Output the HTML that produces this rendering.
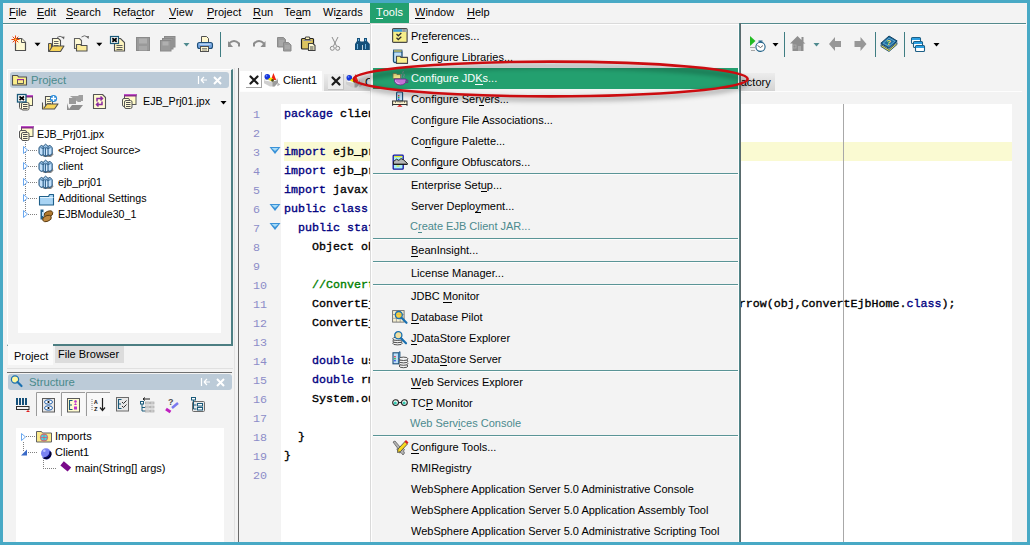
<!DOCTYPE html>
<html><head><meta charset="utf-8">
<style>
html,body{margin:0;padding:0}
body{width:1030px;height:545px;overflow:hidden;position:relative;background:#48a9c5;font-family:"Liberation Sans",sans-serif;font-size:11px;color:#000}
.a{position:absolute}
.t{position:absolute;line-height:13px;white-space:pre;font-size:11px}
u{text-decoration:none;border-bottom:1px solid currentColor;display:inline-block;line-height:11px}
.code{position:absolute;font-family:"Liberation Mono",monospace;font-size:11.67px;line-height:19px;white-space:pre;font-weight:normal;color:#000;-webkit-text-stroke:0.35px currentColor}
.kw{color:#000080}
.cm{color:#008000;font-weight:normal}
.ln{position:absolute;font-family:"Liberation Mono",monospace;font-size:11.67px;line-height:19px;color:#8c8cc8;white-space:pre}
</style></head><body>
<!-- window interior -->
<div class="a" style="left:3px;top:3px;width:1024px;height:539px;background:#f3f3f3"></div>
<!-- menubar -->
<div class="a" style="left:3px;top:23px;width:1023px;height:1px;background:#53898c"></div>
<div class="a" style="left:3px;top:24px;width:1024px;height:1px;background:#fdfdfd"></div>
<div class="a" style="left:370px;top:3px;width:39px;height:20px;background:#23a06f"></div>
<div class="t" style="left:9px;top:6px"><u>F</u>ile</div>
<div class="t" style="left:37px;top:6px"><u>E</u>dit</div>
<div class="t" style="left:66px;top:6px"><u>S</u>earch</div>
<div class="t" style="left:113px;top:6px">Refa<u>c</u>tor</div>
<div class="t" style="left:169px;top:6px"><u>V</u>iew</div>
<div class="t" style="left:207px;top:6px"><u>P</u>roject</div>
<div class="t" style="left:253px;top:6px"><u>R</u>un</div>
<div class="t" style="left:284px;top:6px">Te<u>a</u>m</div>
<div class="t" style="left:323px;top:6px">Wi<u>z</u>ards</div>
<div class="t" style="left:376px;top:6px;color:#fff"><u>T</u>ools</div>
<div class="t" style="left:415px;top:6px"><u>W</u>indow</div>
<div class="t" style="left:467px;top:6px"><u>H</u>elp</div>

<svg class="a" style="left:0;top:0" width="1030" height="70"><path d="M15.5 38.5h6l4 4v8h-10z" fill="#fffbd6" stroke="#505050" stroke-width="1.2" stroke-linejoin="round"/><path d="M21.5 38.5v4h4" fill="#fffbd6" stroke="#505050" stroke-width="1"/><g stroke="#e8400c" stroke-width="1"><path d="M15.5 35.5v8M11.5 39.5h8M12.7 36.7l5.6 5.6M18.3 36.7l-5.6 5.6"/></g><circle cx="15.5" cy="39.5" r="0.9" fill="#ffd020"/><path d="M34.5 42.8h6l-3 3.5z" fill="#000"/><path d="M48.5 43.5h3v8h-3z" fill="#f0c850" stroke="#505050" stroke-width="1"/><path d="M52.5 38.5h6l2 2v8.5h-8z" fill="#fffbd6" stroke="#505050" stroke-width="1.1"/><path d="M54 41.5h4.5M54 43.5h4.5M54 45.5h4.5" stroke="#606060" stroke-width="1"/><path d="M49 51.5l3.5-5.5h11.5l-3.5 5.5z" fill="#f7d45a" stroke="#505050" stroke-width="1.1" stroke-linejoin="round"/><path d="M57 37.5q3-2.5 6 0" fill="none" stroke="#707070" stroke-width="1"/><path d="M61.5 37l2.5 2.5 0.5-3z" fill="#606060"/><path d="M74.5 38.5h5l2 2v8h-7z" fill="#fffbd6" stroke="#606060" stroke-width="1.1"/><path d="M76.5 44.5h4l1 1h5.5v5.5h-10.5z" fill="#fcec9a" stroke="#505050" stroke-width="1.1" stroke-linejoin="round"/><path d="M81.5 37q3-2.5 6 0" fill="none" stroke="#707070" stroke-width="1"/><path d="M86 36.5l2.5 2.5 0.5-3z" fill="#606060"/><path d="M96.3 42.8h6l-3 3.5z" fill="#000"/><path d="M114.5 38.5h6l4 4v8.5h-10z" fill="#fff6c0" stroke="#505050" stroke-width="1.1"/><g stroke="#606060" stroke-width="1"><path d="M116.5 45.5h6M116.5 47.5h6M116.5 49.5h6"/></g><rect x="110.5" y="36.5" width="8" height="7" fill="#fff" stroke="#1a5a7a" stroke-width="1.2"/><path d="M112.3 38.3l4.4 3.4M116.7 38.3l-4.4 3.4" stroke="#000" stroke-width="1.8"/><rect x="136.5" y="37.5" width="13" height="13" fill="#9a9a9a" stroke="#8a8a8a"/><rect x="139" y="38.5" width="8" height="5" fill="#b0b0b0"/><rect x="139" y="46" width="8" height="4.5" fill="#a8a8a8"/><rect x="164.5" y="36.5" width="10.5" height="10.5" fill="#9a9a9a" stroke="#8a8a8a"/><rect x="162.5" y="38.5" width="10.5" height="10.5" fill="#9a9a9a" stroke="#8a8a8a"/><rect x="160.5" y="40.5" width="10.5" height="10.5" fill="#9a9a9a" stroke="#8a8a8a"/><rect x="162.5" y="41.5" width="6" height="4" fill="#b0b0b0"/><path d="M183.5 43h6l-3 3.5z" fill="#4e8a8e"/><path d="M201.5 36.5h5l2 2v4h-7z" fill="#fff8d0" stroke="#505050" stroke-width="1"/><rect x="197.5" y="42.5" width="15" height="6" rx="2" fill="#74a4de" stroke="#1f4f78" stroke-width="1.1"/><rect x="199.5" y="43.5" width="11" height="1.5" fill="#b8d4f4"/><rect x="200.5" y="46.5" width="8" height="5" fill="#fff8d0" stroke="#505050" stroke-width="1"/><path d="M202 48.5h5M202 50h5" stroke="#707070" stroke-width="0.8"/><path d="M229 43.5q5-5 10 0v3" fill="none" stroke="#8c8c8c" stroke-width="2"/><path d="M228 41v6h5z" fill="#8c8c8c"/><path d="M254 46.5v-3q5-5 10 0" fill="none" stroke="#8c8c8c" stroke-width="2"/><path d="M265.5 41v6h-5z" fill="#8c8c8c"/><path d="M277.5 37.5h6l2 2v7.5h-8z" fill="#9c9c9c" stroke="#8c8c8c"/><path d="M279 41h5M279 43h5M279 45h5" stroke="#bcbcbc" stroke-width="0.8"/><path d="M283.5 42.5h5l2.5 2.5v6h-7.5z" fill="#9c9c9c" stroke="#8c8c8c"/><path d="M285 46h5M285 48h5" stroke="#bcbcbc" stroke-width="0.8"/><rect x="301.5" y="38.5" width="12" height="10.5" rx="1" fill="#dcc460" stroke="#202020" stroke-width="1.2"/><path d="M305 39.5h5l-0.5-2.5h-4z" fill="#fff6c0" stroke="#303030" stroke-width="0.9"/><path d="M303.5 40.5h8" stroke="#8a8a9a" stroke-width="1"/><path d="M308.5 43.5h4.5l2 2v5h-6.5z" fill="#fffbd6" stroke="#404040" stroke-width="1.1"/><rect x="310" y="46.5" width="3.5" height="1" fill="#404040"/><rect x="310" y="48.5" width="3.5" height="1" fill="#404040"/><g fill="none" stroke="#8c8c8c" stroke-width="1"><path d="M332 37l4.5 9M338 37l-4.5 9"/><circle cx="332.3" cy="48.3" r="2"/><circle cx="337.7" cy="48.3" r="2"/></g><path d="M357 38h3v3l2 3v6h-7v-6l2-3z" fill="#15507a"/><path d="M364 38h3v3l2.8 3v6h-7v-6l1.2-3z" fill="#15507a"/><rect x="360" y="41.5" width="4" height="3.5" fill="#15507a"/><path d="M358.5 39v2M357.5 44v5M365.5 39v2M365.5 44v5" stroke="#78c0ec" stroke-width="0.9"/><path d="M750 36v10l5.5-5z" fill="#22bb22"/><circle cx="760.5" cy="46.8" r="4.6" fill="#fff" stroke="#1d5f86" stroke-width="1.1"/><path d="M758.5 41.2h4M760.5 41.2v1" stroke="#1d5f86" stroke-width="1.2"/><path d="M757.5 45.5l3 2 2.5-2" fill="none" stroke="#404040" stroke-width="0.8"/><path d="M750 47.5h5M751 50.5h4" stroke="#a8a8a8" stroke-width="1"/><path d="M772.5 43h6l-3 3.5z" fill="#000"/><path d="M790 43.5l7.5-7.5 4 4v-3h2v5l2 1.5h-2v7.5h-11v-7.5z" fill="#8e8e8e"/><rect x="793" y="45" width="3" height="3" fill="none" stroke="#b0b0b0" stroke-width="0.8"/><rect x="798" y="46" width="3" height="5" fill="#a8a8a8"/><path d="M813.5 43h6l-3 3.5z" fill="#4e8a8e"/><path d="M829 44l6-7v4h6v6h-6v4z" fill="#979797"/><path d="M866.5 44l-6-7v4h-6v6h6v4z" fill="#979797"/><path d="M881 44.5L889 49.5 897 42.5V44.5L889 51.5 881 46.5Z" fill="#f8e040" stroke="#174e78" stroke-width="0.9"/><path d="M880.8 43.3L889 36 897.2 41 889 48.3Z" fill="#1f6f9f" stroke="#0e3e60" stroke-width="1"/><path d="M883.2 43.2L889 38.2 894.8 41.2 889 46.2Z" fill="none" stroke="#8ac8ee" stroke-width="0.6"/><text x="886.3" y="45.3" font-family="Liberation Sans" font-size="8" font-weight="bold" fill="#f8ec58">?</text><rect x="911.5" y="37.5" width="9" height="6" rx="1" fill="#fff" stroke="#1d5f86" stroke-width="1.1"/><rect x="912.0" y="38.0" width="8" height="2" fill="#2b9ee0"/><rect x="913.5" y="41.5" width="9" height="6" rx="1" fill="#fff" stroke="#1d5f86" stroke-width="1.1"/><rect x="914.0" y="42.0" width="8" height="2" fill="#2b9ee0"/><rect x="915.5" y="45.5" width="9" height="6" rx="1" fill="#fff" stroke="#1d5f86" stroke-width="1.1"/><rect x="916.0" y="46.0" width="8" height="2" fill="#2b9ee0"/><path d="M933.5 43h6l-3 3.5z" fill="#000"/></svg>
<!-- toolbar separators -->
<div class="a" style="left:220px;top:32px;width:1px;height:25px;background:#3f7d82"></div>
<div class="a" style="left:784px;top:32px;width:1px;height:25px;background:#3f7d82"></div>
<div class="a" style="left:875px;top:32px;width:1px;height:25px;background:#3f7d82"></div>
<div class="a" style="left:904px;top:32px;width:1px;height:25px;background:#3f7d82"></div>

<!-- PROJECT PANEL -->
<div class="a" style="left:7px;top:69px;width:223px;height:274px;background:#f3f3f3;border-top:1px solid #fff;border-left:1px solid #fff;border-right:2px solid #4c7e82;border-bottom:2px solid #4c7e82"></div>
<div class="a" style="left:10px;top:72px;width:219px;height:16px;background:#bccbd8;border-radius:3px"></div>
<div class="t" style="left:31px;top:74px;color:#4a8a8c;font-size:11.3px">Project</div>
<div class="a" style="left:18px;top:125px;width:203px;height:208px;background:#fff"></div>
<div class="t" style="left:143px;top:95px;font-size:10.7px">EJB_Prj01.jpx</div>
<div class="t" style="left:37px;top:128px;font-size:10.7px">EJB_Prj01.jpx</div>
<div class="t" style="left:58px;top:144px;font-size:10.7px">&lt;Project Source&gt;</div>
<div class="t" style="left:58px;top:160px;font-size:10.7px">client</div>
<div class="t" style="left:58px;top:176px;font-size:10.7px">ejb_prj01</div>
<div class="t" style="left:58px;top:192px;font-size:10.7px">Additional Settings</div>
<div class="t" style="left:58px;top:208px;font-size:10.7px">EJBModule30_1</div>
<!-- tabs -->
<div class="a" style="left:8px;top:344px;width:45px;height:21px;background:#fbfbfb"></div>
<div class="a" style="left:55px;top:346px;width:69px;height:17px;background:#dcdcdc"></div>
<div class="t" style="left:14px;top:350px">Project</div>
<div class="t" style="left:58px;top:348px">File Browser</div>
<div class="a" style="left:7px;top:368px;width:226px;height:1px;background:#e0e0e0"></div>
<div class="a" style="left:234px;top:68px;width:1px;height:474px;background:#e2e2e2"></div>
<div class="a" style="left:7px;top:372px;width:225px;height:1px;background:#707070"></div>

<!-- STRUCTURE PANEL -->
<div class="a" style="left:8px;top:374px;width:224px;height:16px;background:#bccbd8;border-radius:3px"></div>
<div class="t" style="left:29px;top:376px;color:#4a8a8c;font-size:11.3px">Structure</div>
<div class="a" style="left:16px;top:428px;width:208px;height:114px;background:#fff"></div>
<div class="t" style="left:55px;top:430px">Imports</div>
<div class="t" style="left:55px;top:446px">Client1</div>
<div class="t" style="left:75px;top:462px">main(String[] args)</div>

<!-- vertical split lines -->
<div class="a" style="left:238px;top:68px;width:1px;height:474px;background:#6a6a6a"></div>

<!-- EDITOR -->
<div class="a" style="left:240px;top:71px;width:82px;height:20px;background:#fff"></div>
<div class="a" style="left:246px;top:72px;width:15px;height:15px;border-right:1px solid #a4a4a4;border-bottom:1px solid #a4a4a4"></div>
<div class="t" style="left:283px;top:74px">Client1</div>
<div class="a" style="left:324px;top:74px;width:50px;height:17px;background:linear-gradient(#ececec,#d4d4d4)"></div>
<div class="a" style="left:328px;top:74px;width:15px;height:15px;background:#ededed;border-right:1px solid #c4c4c4;border-bottom:1px solid #c4c4c4"></div>
<div class="t" style="left:365px;top:76px">ConvertEjb</div>
<div class="a" style="left:740px;top:73px;width:35px;height:18px;background:linear-gradient(#ececec,#d4d4d4)"></div>
<div class="t" style="left:734px;top:76px">Factory</div>
<div class="a" style="left:240px;top:91px;width:782px;height:1px;background:#fdfdfd"></div>
<div class="a" style="left:281px;top:104px;width:731px;height:438px;background:#fff"></div>
<div class="a" style="left:284px;top:142px;width:728px;height:19px;background:#fafad2"></div>
<div class="a" style="left:843px;top:104px;width:1px;height:438px;background:#a8a8a8"></div>

<div class="ln" style="left:253px;top:106px">1</div>
<div class="ln" style="left:253px;top:125px">2</div>
<div class="ln" style="left:253px;top:144px">3</div>
<div class="ln" style="left:253px;top:163px">4</div>
<div class="ln" style="left:253px;top:182px">5</div>
<div class="ln" style="left:253px;top:201px">6</div>
<div class="ln" style="left:253px;top:220px">7</div>
<div class="ln" style="left:253px;top:239px">8</div>
<div class="ln" style="left:253px;top:258px">9</div>
<div class="ln" style="left:253px;top:277px">10</div>
<div class="ln" style="left:253px;top:296px">11</div>
<div class="ln" style="left:253px;top:315px">12</div>
<div class="ln" style="left:253px;top:334px">13</div>
<div class="ln" style="left:253px;top:353px">14</div>
<div class="ln" style="left:253px;top:372px">15</div>
<div class="ln" style="left:253px;top:391px">16</div>
<div class="ln" style="left:253px;top:410px">17</div>
<div class="ln" style="left:253px;top:429px">18</div>
<div class="ln" style="left:253px;top:448px">19</div>
<div class="ln" style="left:253px;top:467px">20</div>
<div class="code" style="left:284px;top:105px"><span class="kw">package</span> clientx;</div>
<div class="code" style="left:284px;top:143px"><span class="kw">import</span> ejb_prj01.*;</div>
<div class="code" style="left:284px;top:162px"><span class="kw">import</span> ejb_prj01.x;</div>
<div class="code" style="left:284px;top:181px"><span class="kw">import</span> javax.rmi.*;</div>
<div class="code" style="left:284px;top:200px"><span class="kw">public</span> <span class="kw">class</span> Client1 {</div>
<div class="code" style="left:284px;top:219px">  <span class="kw">public</span> <span class="kw">static</span> void</div>
<div class="code" style="left:284px;top:238px">    Object obj = x;</div>
<div class="code" style="left:284px;top:276px">    <span class="cm">//ConvertEjb</span></div>
<div class="code" style="left:284px;top:295px">    ConvertEjbHome home = (ConvertEjbHome)PortableRemoteObject.narrow(obj,ConvertEjbHome.<span class="kw">class</span>);</div>
<div class="code" style="left:284px;top:314px">    ConvertEjb x;</div>
<div class="code" style="left:284px;top:352px">    <span class="kw">double</span> usd;</div>
<div class="code" style="left:284px;top:371px">    <span class="kw">double</span> rmb;</div>
<div class="code" style="left:284px;top:390px">    System.out;</div>
<div class="code" style="left:284px;top:428px">  }</div>
<div class="code" style="left:284px;top:447px">}</div>

<svg class="a" style="left:0;top:0" width="1030" height="545"><path d="M12.5 75.5h5l1 1.5h8v8h-14z" fill="#fbee8a" stroke="#505050" stroke-width="1.1" stroke-linejoin="round"/><rect x="17.5" y="79.5" width="6" height="4" fill="#fbee8a" stroke="#505050" stroke-width="0.9"/><rect x="17" y="79" width="7" height="1.2" fill="#9a2aa0"/><path d="M198.5 76v8M201 80h6M201 80l3-3M201 80l3 3" stroke="#fff" stroke-width="1.2" fill="none"/><path d="M214 77l7 7M221 77l-7 7" stroke="#fff" stroke-width="2"/><rect x="25.5" y="95.5" width="7" height="10" fill="#fffbc8" stroke="#555" stroke-width="1"/><rect x="25" y="95" width="8" height="2.5" fill="#8a2a90"/><rect x="25" y="95" width="8" height="1" fill="#c050c8"/><rect x="19.5" y="101.5" width="7" height="7.5" rx="1.5" fill="#fffbd8" stroke="#555" stroke-width="1"/><rect x="21.5" y="102.5" width="7.5" height="7.5" rx="1.5" fill="#fffbd8" stroke="#555" stroke-width="1"/><path d="M23 104.5h4.5M23 106.5h4.5M23 108.5h4.5" stroke="#505050" stroke-width="1"/><rect x="17.5" y="94.5" width="8.5" height="7.5" fill="#fff" stroke="#1a5a7a" stroke-width="1.3"/><path d="M19.5 96.5l4.5 3.5M24 96.5l-4.5 3.5" stroke="#000" stroke-width="1.6"/><path d="M45.5 96.5h6l1 1v9h-7z" fill="#fffbd6" stroke="#505050" stroke-width="1.1"/><path d="M47 99.5h4M47 101.5h4M47 103.5h4" stroke="#606060" stroke-width="0.9"/><path d="M42.5 102.5v6.5h12l3.5-5h-11l-3 4" fill="#f7d45a" stroke="#505050" stroke-width="1.1" stroke-linejoin="round"/><circle cx="53.5" cy="98.5" r="3.6" fill="#2a8ad8"/><path d="M51 98.5h5M53.5 96v5" stroke="#fff" stroke-width="1.4"/><path d="M70 96h8l1-1h4v6h-2v1h-3" fill="#a0a0a0"/><path d="M69 98h7v6h-7z" fill="#9a9a9a"/><path d="M67 103v7h12l4-5h-11l-3 4z" fill="#8e8e8e"/><path d="M93.5 94.5h9l3 3v11h-12z" fill="#fffbd0" stroke="#555" stroke-width="1.1" stroke-linejoin="round"/><path d="M97 101.5v-3h5M100.5 96.5l2 2-2 2M102 101.5v3h-5M98.5 102.5l-2 2 2 2" fill="none" stroke="#8a2aa0" stroke-width="1.5"/><rect x="124.5" y="94.5" width="11.5" height="10" fill="#fffbc8" stroke="#555" stroke-width="1"/><rect x="124" y="94" width="12.5" height="2.5" fill="#8a2a90"/><rect x="124" y="94" width="12.5" height="1" fill="#c050c8"/><rect x="122.5" y="98.5" width="7" height="8" rx="1.5" fill="#fffbd8" stroke="#555" stroke-width="1"/><rect x="124.5" y="100.5" width="7.5" height="8" rx="1.5" fill="#fffbd8" stroke="#555" stroke-width="1"/><path d="M126 102.5h4.5M126 104.5h4.5M126 106.5h4.5" stroke="#505050" stroke-width="1"/><path d="M220.5 101h6l-3 3.5z" fill="#000"/><rect x="21.5" y="126.5" width="11.5" height="10" fill="#fffbc8" stroke="#555" stroke-width="1"/><rect x="21" y="126" width="12.5" height="2.5" fill="#8a2a90"/><rect x="21" y="126" width="12.5" height="1" fill="#c050c8"/><rect x="19.5" y="130.5" width="7" height="8" rx="1.5" fill="#fffbd8" stroke="#555" stroke-width="1"/><rect x="21.5" y="132.5" width="7.5" height="8" rx="1.5" fill="#fffbd8" stroke="#555" stroke-width="1"/><path d="M23 134.5h4.5M23 136.5h4.5M23 138.5h4.5" stroke="#505050" stroke-width="1"/><path d="M25.5 142V215" stroke="#808080" stroke-width="1" stroke-dasharray="1 1"/><path d="M23.5 146.5l4 3.5-4 3.5z" fill="#fff" stroke="#6aa8f0" stroke-width="1"/><path d="M28 150.5H38" stroke="#808080" stroke-width="1" stroke-dasharray="1 1"/><path d="M23.5 162.5l4 3.5-4 3.5z" fill="#fff" stroke="#6aa8f0" stroke-width="1"/><path d="M28 166.5H38" stroke="#808080" stroke-width="1" stroke-dasharray="1 1"/><path d="M23.5 178.5l4 3.5-4 3.5z" fill="#fff" stroke="#6aa8f0" stroke-width="1"/><path d="M28 182.5H38" stroke="#808080" stroke-width="1" stroke-dasharray="1 1"/><path d="M23.5 194.5l4 3.5-4 3.5z" fill="#fff" stroke="#6aa8f0" stroke-width="1"/><path d="M28 198.5H38" stroke="#808080" stroke-width="1" stroke-dasharray="1 1"/><path d="M23.5 210.5l4 3.5-4 3.5z" fill="#fff" stroke="#6aa8f0" stroke-width="1"/><path d="M28 214.5H38" stroke="#808080" stroke-width="1" stroke-dasharray="1 1"/><g transform="translate(38 143)"><path d="M4 12.5l2 1.5h7l2.5-2.5-1-2z" fill="#606060" opacity="0.75"/><path d="M1 4.5L3.2 2.5 5.2 3.3 7.6 1.2 10 3.3 12 2.5 14.2 4.5V10.5L12 12.5 10 11.8 7.6 13.5 5.2 11.8 3.2 12.5 1 10.5Z" fill="#a9d0f2" stroke="#1f4f78" stroke-width="1"/><path d="M5.2 3.5v8.3M10 3.5v8.3M7.6 5v8.3" stroke="#1f4f78" stroke-width="0.9"/><path d="M2.5 4.5l2.7 1 2.4-1.3 2.4 1.3 2.5-1" stroke="#1f4f78" stroke-width="0.8" fill="none"/><path d="M3 6v5M8.6 6.5v5.5M12 6v5" stroke="#e4f2ff" stroke-width="0.9"/></g><g transform="translate(38 159)"><path d="M4 12.5l2 1.5h7l2.5-2.5-1-2z" fill="#606060" opacity="0.75"/><path d="M1 4.5L3.2 2.5 5.2 3.3 7.6 1.2 10 3.3 12 2.5 14.2 4.5V10.5L12 12.5 10 11.8 7.6 13.5 5.2 11.8 3.2 12.5 1 10.5Z" fill="#a9d0f2" stroke="#1f4f78" stroke-width="1"/><path d="M5.2 3.5v8.3M10 3.5v8.3M7.6 5v8.3" stroke="#1f4f78" stroke-width="0.9"/><path d="M2.5 4.5l2.7 1 2.4-1.3 2.4 1.3 2.5-1" stroke="#1f4f78" stroke-width="0.8" fill="none"/><path d="M3 6v5M8.6 6.5v5.5M12 6v5" stroke="#e4f2ff" stroke-width="0.9"/></g><g transform="translate(38 175)"><path d="M4 12.5l2 1.5h7l2.5-2.5-1-2z" fill="#606060" opacity="0.75"/><path d="M1 4.5L3.2 2.5 5.2 3.3 7.6 1.2 10 3.3 12 2.5 14.2 4.5V10.5L12 12.5 10 11.8 7.6 13.5 5.2 11.8 3.2 12.5 1 10.5Z" fill="#a9d0f2" stroke="#1f4f78" stroke-width="1"/><path d="M5.2 3.5v8.3M10 3.5v8.3M7.6 5v8.3" stroke="#1f4f78" stroke-width="0.9"/><path d="M2.5 4.5l2.7 1 2.4-1.3 2.4 1.3 2.5-1" stroke="#1f4f78" stroke-width="0.8" fill="none"/><path d="M3 6v5M8.6 6.5v5.5M12 6v5" stroke="#e4f2ff" stroke-width="0.9"/></g><path d="M39.5 196.5h9l1-2h4v10.5h-14z" fill="#a8d4f4" stroke="#1f5f8a" stroke-width="1.1" stroke-linejoin="round"/><path d="M40 197.5h13.5" stroke="#e8f6ff" stroke-width="0.9"/><path d="M40.5 209.5h3v10h-3z" fill="#1f5f8a"/><rect x="42" y="212" width="2.5" height="4" fill="#bfe0f8"/><ellipse cx="48.5" cy="214" rx="4.5" ry="2.8" fill="#b07a30" stroke="#5a3a10" stroke-width="0.9" transform="rotate(-20 48.5 214)"/><ellipse cx="47" cy="218.5" rx="4.5" ry="2.8" fill="#c08a40" stroke="#5a3a10" stroke-width="0.9" transform="rotate(-20 47 218.5)"/><circle cx="15" cy="379.5" r="3.6" fill="#fff8a0" stroke="#1a70b0" stroke-width="1.2"/><path d="M17.5 382l4 4" stroke="#1a70b0" stroke-width="2.2" stroke-linecap="round"/><path d="M201.5 378v8M204 382h6M204 382l3-3M204 382l3 3" stroke="#fff" stroke-width="1.2" fill="none"/><path d="M217 379l7 7M224 379l-7 7" stroke="#fff" stroke-width="2"/><path d="M17 398v7M20 398v7M23 398v7M26 398v7" stroke="#15507a" stroke-width="2"/><rect x="16.5" y="406.5" width="12.5" height="3" fill="#f3f3f3" stroke="#303030" stroke-width="1"/><path d="M26 412h4l-2-2z" fill="#e02020"/><rect x="36" y="392" width="24" height="24" fill="#f8f8f8"/><path d="M36.5 416V392.5H60" fill="none" stroke="#9a9a9a" stroke-width="1"/><rect x="61" y="392" width="24" height="24" fill="#f8f8f8"/><path d="M61.5 416V392.5H85" fill="none" stroke="#9a9a9a" stroke-width="1"/><rect x="86" y="392" width="24" height="24" fill="#f8f8f8"/><path d="M86.5 416V392.5H110" fill="none" stroke="#9a9a9a" stroke-width="1"/><rect x="42.5" y="398.5" width="12" height="13.5" fill="#e8e8e8" stroke="#5a5a5a" stroke-width="1"/><g fill="#fff" stroke="#1a5aa8" stroke-width="1"><ellipse cx="48.5" cy="402" rx="4" ry="2.2"/><ellipse cx="48.5" cy="408" rx="4" ry="2.2"/></g><circle cx="48.5" cy="402" r="1.1" fill="#000"/><circle cx="48.5" cy="408" r="1.1" fill="#000"/><rect x="67.5" y="398.5" width="12" height="13.5" fill="#fffbd0" stroke="#5a5a5a" stroke-width="1"/><path d="M72.5 400.5h-3v9h3M69.5 405h2.5" stroke="#1a5a7a" stroke-width="1.1" fill="none"/><circle cx="75.5" cy="401.5" r="1.3" fill="#c030d0"/><path d="M74 405l1.5-2 1.5 2z" fill="#c030d0"/><rect x="74" y="406.5" width="3" height="3" fill="#c030d0"/><path d="M92 399v12" stroke="#808080" stroke-width="1" stroke-dasharray="1 1"/><text x="94" y="404" font-family="Liberation Mono" font-size="6" font-weight="bold" fill="#202020">A</text><text x="94" y="410.5" font-family="Liberation Mono" font-size="6" font-weight="bold" fill="#202020">Z</text><path d="M102.5 398v12M100 407.5l2.5 3 2.5-3" stroke="#202020" stroke-width="1.2" fill="none"/><rect x="116.5" y="397.5" width="12" height="13.5" fill="#e8e8e8" stroke="#6a6a6a" stroke-width="1"/><path d="M121.5 399.5h-3v9h3M118.5 404h2.5" stroke="#1a5a7a" stroke-width="1.1" fill="none"/><path d="M122 402l1.5 1.5 3-3M122 406l1.5 1.5 3-3" stroke="#303030" stroke-width="1" fill="none"/><path d="M143 399h7M143 399l2-1.5M143 399l2 1.5" stroke="#202020" stroke-width="1" fill="none"/><rect x="140.5" y="401.5" width="3" height="2.5" fill="#fff" stroke="#1a5a7a" stroke-width="1"/><path d="M142 404v7h3M142 407.5h3" stroke="#1a5a7a" stroke-width="1" fill="none"/><g fill="#d8d8d8" stroke="#a8a8a8" stroke-width="0.7"><rect x="145.5" y="402" width="4" height="2"/><rect x="145.5" y="406" width="4" height="2"/><rect x="145.5" y="410" width="4" height="2"/><rect x="150.5" y="402" width="3.5" height="2"/><rect x="150.5" y="406" width="3.5" height="2"/><rect x="150.5" y="410" width="3.5" height="2"/></g><text x="168" y="405" font-family="Liberation Sans" font-size="9" font-weight="bold" fill="#505050">?</text><path d="M166 409l4.5 3" stroke="#c020c0" stroke-width="3"/><path d="M172 408l6-5" stroke="#7a7af0" stroke-width="2.5"/><rect x="191.5" y="397.5" width="4" height="2.5" fill="#fff" stroke="#1a5a7a" stroke-width="1"/><rect x="192.5" y="401.5" width="12" height="10" rx="1" fill="#e8e8e8" stroke="#6a6a6a" stroke-width="1"/><path d="M193.5 400v9h3M193.5 405h3" stroke="#1a5a7a" stroke-width="1" fill="none"/><rect x="197.5" y="403.5" width="5" height="2.5" fill="#fff" stroke="#1a5a7a" stroke-width="1"/><rect x="197.5" y="407.5" width="5" height="2.5" fill="#fff" stroke="#1a5a7a" stroke-width="1"/><path d="M21.5 433.5l4 3.5-4 3.5z" fill="#fff" stroke="#6aa8f0" stroke-width="1"/><path d="M26 436.5H36" stroke="#808080" stroke-width="1" stroke-dasharray="1 1"/><path d="M36.5 431.5h5l1 1.5h9v9h-15z" fill="#fbe98a" stroke="#606060" stroke-width="1" stroke-linejoin="round"/><circle cx="44" cy="437.5" r="3.6" fill="#40d8e8" stroke="#d06070" stroke-width="1"/><path d="M40.5 437.5h7M44 434v7" stroke="#d06070" stroke-width="0.8"/><path d="M23.5 442V452" stroke="#808080" stroke-width="1" stroke-dasharray="1 1"/><path d="M21 455.5h6v-6z" fill="#3a6ac8"/><path d="M28 452.5H38" stroke="#808080" stroke-width="1" stroke-dasharray="1 1"/><circle cx="46" cy="453.3" r="5" fill="#7a82f2"/><path d="M50.6 451.2A5 5 0 0 1 42 457.2A6 6 0 0 0 49.5 451z" fill="#0a0a80"/><path d="M50.8 452a5 5 0 0 1 -6.5 6" stroke="#000" stroke-width="1" fill="none"/><circle cx="44.3" cy="450.8" r="1.3" fill="#b8c0ff"/><path d="M43.5 460V469" stroke="#808080" stroke-width="1" stroke-dasharray="1 1"/><path d="M43 468.5H57" stroke="#808080" stroke-width="1" stroke-dasharray="1 1"/><path d="M63.8 461.2L71.2 467.4 67.6 471.6 60.4 465.4z" fill="#7a0a8a"/><path d="M269.5 147h11l-5.5 7z" fill="#3a92d8"/><path d="M271.5 148h7l-3.5 3z" fill="#a8dcf8"/><path d="M269.5 204h11l-5.5 7z" fill="#3a92d8"/><path d="M271.5 205h7l-3.5 3z" fill="#a8dcf8"/><path d="M269.5 223h11l-5.5 7z" fill="#3a92d8"/><path d="M271.5 224h7l-3.5 3z" fill="#a8dcf8"/><g transform="translate(264 73)"><path d="M13.5 9.5l2.8 2-3 1.8z" fill="#b4b4b4"/><path d="M0 6.3L14 5.8v4l-3.5 3.7h-4.5L0 10.3z" fill="#cfcfcf"/><path d="M8.5 8.3L14 5.8v4l-3.5 3.7h-2z" fill="#9c9c9c"/><path d="M0.5 7L8 8.3 13.5 6.6" stroke="#fff" stroke-width="1" fill="none"/><circle cx="3.3" cy="3.7" r="2.8" fill="#1434d8"/><circle cx="2.5" cy="2.8" r="0.9" fill="#6a8aff"/><path d="M9.4 0.1L12.2 6.9H7z" fill="#f22010"/><path d="M3.9 6.2L6.8 4.3l2.9 2-2.9 1.8z" fill="#f2e400"/><circle cx="8.5" cy="7.4" r="1.3" fill="#4a4a10"/></g><g transform="translate(346 74)"><path d="M13.5 9.5l2.8 2-3 1.8z" fill="#b4b4b4"/><path d="M0 6.3L14 5.8v4l-3.5 3.7h-4.5L0 10.3z" fill="#cfcfcf"/><path d="M8.5 8.3L14 5.8v4l-3.5 3.7h-2z" fill="#9c9c9c"/><path d="M0.5 7L8 8.3 13.5 6.6" stroke="#fff" stroke-width="1" fill="none"/><circle cx="3.3" cy="3.7" r="2.8" fill="#1434d8"/><circle cx="2.5" cy="2.8" r="0.9" fill="#6a8aff"/><path d="M9.4 0.1L12.2 6.9H7z" fill="#f22010"/><path d="M3.9 6.2L6.8 4.3l2.9 2-2.9 1.8z" fill="#f2e400"/><circle cx="8.5" cy="7.4" r="1.3" fill="#4a4a10"/></g><path d="M250.5 76.5l7 7M257.5 76.5l-7 7" stroke="#1a1a1a" stroke-width="2.2" stroke-linecap="round"/><path d="M332.5 77.5l7 7M339.5 77.5l-7 7" stroke="#1a1a1a" stroke-width="2.2" stroke-linecap="round"/></svg>
<!-- MENU POPUP -->
<div class="a" style="left:370px;top:23px;width:371px;height:522px;background:#f3f3f3"></div>
<div class="a" style="left:370px;top:24px;width:1px;height:521px;background:#dadada"></div>
<div class="a" style="left:371px;top:24px;width:1px;height:521px;background:#fefefe"></div>
<div class="a" style="left:738px;top:24px;width:1px;height:521px;background:#fdfdfd"></div>
<div class="a" style="left:739px;top:23px;width:1px;height:522px;background:#4f8488"></div>
<div class="a" style="left:740px;top:23px;width:1px;height:522px;background:#5a6a6c"></div>
<div class="a" style="left:370px;top:23px;width:369px;height:1px;background:#dadada"></div>
<div class="a" style="left:371px;top:24px;width:367px;height:1px;background:#fefefe"></div>
<svg class="a" style="left:392px;top:28px" width="18" height="18" viewBox="0 0 18 18"><rect x="0.6" y="0.6" width="14.5" height="13.8" rx="1" fill="#f6ee8a" stroke="#4a4a4a" stroke-width="1.2"/><rect x="1.2" y="1.2" width="13.3" height="2.6" fill="#3a9ad8"/><rect x="10" y="1.2" width="4.5" height="2.6" fill="#b8b8b8"/><path d="M11.2 1.2v2.6M12.8 1.2v2.6" stroke="#707070" stroke-width="0.6"/><path d="M4.5 6l1.8 1.8 3-2.8M4.5 9.8l1.8 1.8 3-2.8" fill="none" stroke="#303030" stroke-width="1.3"/></svg>
<div class="t" style="left:411px;top:30px;color:#000">Pr<u>e</u>ferences...</div>
<svg class="a" style="left:392px;top:49px" width="18" height="18" viewBox="0 0 18 18"><rect x="1.5" y="2" width="8.5" height="11.5" rx="1.5" fill="#bfe0f8" stroke="#1a4f78" stroke-width="1.3"/><rect x="1.5" y="1" width="8.5" height="2" fill="#f6e46a" stroke="#1a4f78" stroke-width="0.8"/><path d="M4.5 7.2h3.5l1 1.2h6.5v6h-11z" fill="#fbf08a" stroke="#4a4a4a" stroke-width="1.1" stroke-linejoin="round"/></svg>
<div class="t" style="left:411px;top:51px;color:#000">Configure Libraries...</div>
<div class="a" style="left:373px;top:68px;width:365px;height:21px;background:#23a06f"></div>
<svg class="a" style="left:392px;top:70px" width="18" height="18" viewBox="0 0 18 18"><path d="M1 3.5h3l1 1h3.5v4h-7.5z" fill="#f6ee8a" stroke="#7a7a50" stroke-width="0.8"/><path d="M2.5 9h11.5v1.5c0 2.8-2.5 4.5-5.5 4.5s-6-1.7-6-4.5z" fill="#c272d6" stroke="#6a2f8a" stroke-width="0.9"/><path d="M3.5 10.5c0 2 2 3 4 3" stroke="#f0c0f8" stroke-width="0.8" fill="none"/><path d="M14 10h1.8v2.5h-2" fill="none" stroke="#6a2f8a" stroke-width="0.9"/><path d="M9.5 7.5c-1-1.5 1-2 0-3.5M12 7.5c-1-1.5 1-2 0-3.5M11 3.5c-1-1 1-1.5 0-2.5" fill="none" stroke="#b08ab0" stroke-width="0.7"/></svg>
<div class="t" style="left:411px;top:72px;color:#fff">Configure JD<u>K</u>s...</div>
<svg class="a" style="left:392px;top:91px" width="18" height="18" viewBox="0 0 18 18"><rect x="4.6" y="1" width="6" height="9" rx="1" fill="#bfe0f8" stroke="#1a4f78" stroke-width="1.1"/><rect x="6" y="4" width="1.4" height="1.4" fill="#e03030"/><rect x="6" y="5.8" width="1.4" height="1.4" fill="#22b040"/><rect x="6" y="7.6" width="1.4" height="1.4" fill="#2040e0"/><rect x="0.6" y="10" width="14.4" height="3.5" fill="#fbf4d0" stroke="#303030" stroke-width="1"/><path d="M3.5 10.2v1.6M6 10.2v1.2M8 10.2v1.6M10 10.2v1.2M12.5 10.2v1.6" stroke="#303030" stroke-width="0.7"/><path d="M0.6 13.5v1.5M15 13.5v1.5" stroke="#303030" stroke-width="0.8"/><path d="M5 15.8l2.8-2.3 2.8 2.3z" fill="#e02020"/></svg>
<div class="t" style="left:411px;top:93px;color:#000">Configure Ser<u>v</u>ers...</div>
<div class="t" style="left:411px;top:114px;color:#000">Con<u>f</u>igure File Associations...</div>
<div class="t" style="left:411px;top:135px;color:#000">Co<u>n</u>figure Palette...</div>
<svg class="a" style="left:392px;top:154px" width="18" height="18" viewBox="0 0 18 18"><rect x="1.2" y="1.2" width="10" height="14" rx="0.8" fill="#a8f0f8" stroke="#1414a0" stroke-width="1.3"/><rect x="2.2" y="2" width="8" height="1.2" fill="#e8e820"/><path d="M1.5 7.5l3-2.3 2.3 1.2 2.2-1.8 2.5 1.2 4 3.7v0.8h-14z" fill="#b8b8b8" stroke="#101010" stroke-width="0.9"/><path d="M1.5 10.3h13.5" stroke="#101010" stroke-width="0.9"/><rect x="4.5" y="11.5" width="3" height="1" fill="#e8e820"/></svg>
<div class="t" style="left:411px;top:156px;color:#000">Confi<u>g</u>ure Obfuscators...</div>
<div class="a" style="left:373px;top:173px;width:365px;height:1px;background:#5a9496"></div>
<div class="a" style="left:373px;top:174px;width:365px;height:1px;background:#fdfdfd"></div>
<div class="t" style="left:411px;top:179px;color:#000">Enterprise Set<u>u</u>p...</div>
<div class="t" style="left:411px;top:200px;color:#000">Server Deplo<u>y</u>ment...</div>
<div class="t" style="left:410px;top:220px;color:#4c8a8e">C<u>r</u>eate EJB Client JAR...</div>
<div class="a" style="left:373px;top:238px;width:365px;height:1px;background:#5a9496"></div>
<div class="a" style="left:373px;top:239px;width:365px;height:1px;background:#fdfdfd"></div>
<div class="t" style="left:411px;top:244px;color:#000"><u>B</u>eanInsight...</div>
<div class="a" style="left:373px;top:261px;width:365px;height:1px;background:#5a9496"></div>
<div class="a" style="left:373px;top:262px;width:365px;height:1px;background:#fdfdfd"></div>
<div class="t" style="left:411px;top:267px;color:#000">License Manager...</div>
<div class="a" style="left:373px;top:284px;width:365px;height:1px;background:#5a9496"></div>
<div class="a" style="left:373px;top:285px;width:365px;height:1px;background:#fdfdfd"></div>
<div class="t" style="left:411px;top:290px;color:#000">JDBC <u>M</u>onitor</div>
<svg class="a" style="left:392px;top:309px" width="18" height="18" viewBox="0 0 18 18"><rect x="0.6" y="1.6" width="11.5" height="11.5" fill="#f6f0d0" stroke="#6a6a6a" stroke-width="0.9"/><path d="M0.6 5.5h11.5M0.6 9.3h11.5M4.4 1.6v11.5M8.2 1.6v11.5" stroke="#8a8a8a" stroke-width="0.7"/><circle cx="6.8" cy="6" r="3.5" fill="#f8c820" fill-opacity="0.8" stroke="#1a70b0" stroke-width="1.3"/><path d="M9.5 8.8l5 5" stroke="#1a70b0" stroke-width="2.2" stroke-linecap="round"/></svg>
<div class="t" style="left:411px;top:311px;color:#000"><u>D</u>atabase Pilot</div>
<svg class="a" style="left:392px;top:330px" width="18" height="18" viewBox="0 0 18 18"><g fill="#f3f3f3" stroke="#404040" stroke-width="0.9"><ellipse cx="5.5" cy="13.2" rx="4.8" ry="1.7"/><ellipse cx="5.5" cy="11" rx="4.8" ry="1.7"/><ellipse cx="5.5" cy="8.8" rx="4.8" ry="1.7"/></g><circle cx="6.3" cy="5.3" r="3.6" fill="#f2e0a0" stroke="#1a70b0" stroke-width="1.3"/><path d="M9 8.3l5 5" stroke="#1a70b0" stroke-width="2.2" stroke-linecap="round"/></svg>
<div class="t" style="left:411px;top:332px;color:#000"><u>J</u>DataStore Explorer</div>
<svg class="a" style="left:392px;top:351px" width="18" height="18" viewBox="0 0 18 18"><rect x="1" y="1.8" width="5.5" height="11" fill="#bfe0f8" stroke="#1a4f78" stroke-width="1.1"/><path d="M6.5 1.8l1.5-1.2v11l-1.5 1.2" fill="#5a9ad0" stroke="#1a4f78" stroke-width="0.8"/><rect x="2.2" y="5" width="1.5" height="1.4" fill="#e03030"/><rect x="2.2" y="7" width="1.5" height="1.4" fill="#22b040"/><rect x="2.2" y="9" width="1.5" height="1.4" fill="#2040e0"/><g fill="#f3f3f3" stroke="#404040" stroke-width="0.9"><ellipse cx="11.5" cy="15" rx="4.4" ry="1.7"/><ellipse cx="11.5" cy="12.6" rx="4.4" ry="1.7"/><ellipse cx="11.5" cy="10.2" rx="4.4" ry="1.7"/><ellipse cx="11.5" cy="7.8" rx="4.4" ry="1.7"/></g></svg>
<div class="t" style="left:411px;top:353px;color:#000">JData<u>S</u>tore Server</div>
<div class="a" style="left:373px;top:370px;width:365px;height:1px;background:#5a9496"></div>
<div class="a" style="left:373px;top:371px;width:365px;height:1px;background:#fdfdfd"></div>
<div class="t" style="left:411px;top:376px;color:#000"><u>W</u>eb Services Explorer</div>
<svg class="a" style="left:392px;top:395px" width="18" height="18" viewBox="0 0 18 18"><circle cx="3.6" cy="7.6" r="2.9" fill="#f4fffa" stroke="#202020" stroke-width="1.1"/><circle cx="12.4" cy="7.6" r="2.9" fill="#f4fffa" stroke="#202020" stroke-width="1.1"/><path d="M6.5 7.6h3" stroke="#202020" stroke-width="1"/><circle cx="3.3" cy="7.9" r="1.5" fill="#30c8b0"/><circle cx="12.1" cy="7.9" r="1.5" fill="#30c8b0"/></svg>
<div class="t" style="left:411px;top:397px;color:#000">TC<u>P</u> Monitor</div>
<div class="t" style="left:410px;top:417px;color:#4c8a8e">Web Serv<u>i</u>ces Console</div>
<div class="a" style="left:373px;top:435px;width:365px;height:1px;background:#5a9496"></div>
<div class="a" style="left:373px;top:436px;width:365px;height:1px;background:#fdfdfd"></div>
<svg class="a" style="left:392px;top:439px" width="18" height="18" viewBox="0 0 18 18"><path d="M1 3l2-1 5 6 1.5-0.5 3 3-1 1.5 1 2-1.5 2-2-2.5 -1.5 0.5-2.5-3.5 0.5-1.5z" fill="#b4b4b4" stroke="#606060" stroke-width="0.8"/><path d="M6 10l7-7.5 2.5 2.5-7 7.5-3 1z" fill="#f8d820" stroke="#404040" stroke-width="0.8"/><path d="M12.5 2.5l1.5-1.5 2.5 2.5-1.5 1.5z" fill="#e02020"/></svg>
<div class="t" style="left:411px;top:441px;color:#000"><u>C</u>onfigure Tools...</div>
<div class="t" style="left:411px;top:462px;color:#000">RMIRegistry</div>
<div class="t" style="left:411px;top:483px;color:#000">WebSphere Application Server 5.0 Administrative Console</div>
<div class="t" style="left:411px;top:504px;color:#000">WebSphere Application Server 5.0 Application Assembly Tool</div>
<div class="t" style="left:411px;top:525px;color:#000">WebSphere Application Server 5.0 Administrative Scripting Tool</div>
<svg class="a" style="left:0;top:0" width="1030" height="545"><defs><filter id="sh" x="-10%" y="-50%" width="120%" height="200%"><feGaussianBlur stdDeviation="2.5"/></filter></defs><ellipse cx="553" cy="82.5" rx="194" ry="16.5" fill="none" stroke="rgba(0,0,0,0.32)" stroke-width="4" filter="url(#sh)"/><ellipse cx="550.7" cy="79" rx="197" ry="17.4" fill="none" stroke="#cc0c10" stroke-width="2.6"/></svg>
<div class="a" style="left:0;top:542px;width:1030px;height:3px;background:#48a9c5"></div>
</body></html>
